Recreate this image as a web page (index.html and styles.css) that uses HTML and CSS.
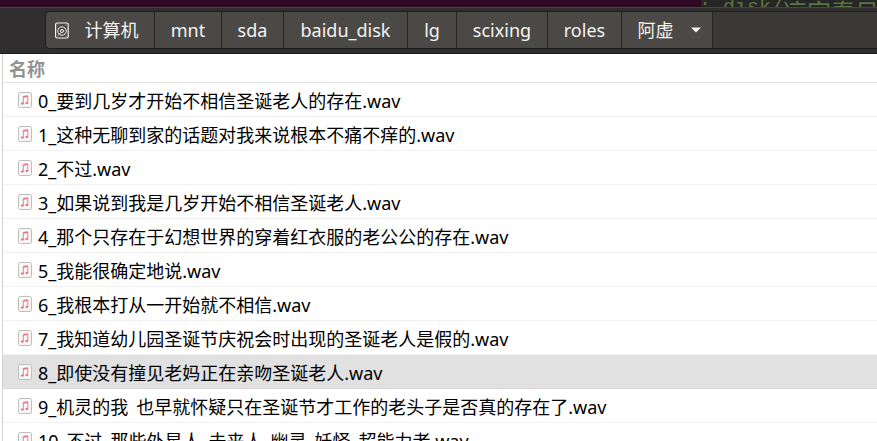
FILE: index.html
```
<!DOCTYPE html>
<html lang="zh-CN">
<head>
<meta charset="utf-8">
<title>阿虚</title>
<link rel="stylesheet" href="styles.css">
</head>
<body>
<div class="desktop"><div class="terminal"><span class="cmd">: disk/</span><span class="name">凉宫春日</span></div></div>
<header class="toolbar">
  <nav class="pathbar">
    <div class="crumb root">
      <svg width="14" height="17" viewBox="0 0 14 17" fill="none" stroke="#f4f4f2"><rect x=".6" y="1" width="12.600" height="15" rx="1.500" stroke-width="1.200"/><circle cx="7" cy="9" r="4.200" stroke-width="1"/><circle cx="7" cy="9" r="1.500" stroke-width="1"/><path d="M6 10.500L3.500 13" stroke-width=".9"/><path d="M2.500 3h1M10.500 3h1M2.500 14h1M10.500 14h1" stroke-width=".6"/></svg>
      <span>计算机</span>
    </div>
    <div class="crumb mnt"><span>mnt</span></div>
    <div class="crumb sda"><span>sda</span></div>
    <div class="crumb baidu"><span>baidu_disk</span></div>
    <div class="crumb lg"><span>lg</span></div>
    <div class="crumb scixing"><span>scixing</span></div>
    <div class="crumb roles"><span>roles</span></div>
    <div class="crumb current"><span>阿虚</span><svg width="10" height="6" viewBox="0 0 10 6"><path d="M0 .5h10L5 5.500z" fill="#f4f4f2"/></svg></div>
  </nav>
</header>
<main class="list">
  <div class="heading">名称</div>
  <div class="row"><svg class="icon"><use href="#note"/></svg><span>0_要到几岁才开始不相信圣诞老人的存在.wav</span></div>
  <div class="row"><svg class="icon"><use href="#note"/></svg><span>1_这种无聊到家的话题对我来说根本不痛不痒的.wav</span></div>
  <div class="row"><svg class="icon"><use href="#note"/></svg><span>2_不过.wav</span></div>
  <div class="row"><svg class="icon"><use href="#note"/></svg><span>3_如果说到我是几岁开始不相信圣诞老人.wav</span></div>
  <div class="row"><svg class="icon"><use href="#note"/></svg><span>4_那个只存在于幻想世界的穿着红衣服的老公公的存在.wav</span></div>
  <div class="row"><svg class="icon"><use href="#note"/></svg><span>5_我能很确定地说.wav</span></div>
  <div class="row"><svg class="icon"><use href="#note"/></svg><span>6_我根本打从一开始就不相信.wav</span></div>
  <div class="row"><svg class="icon"><use href="#note"/></svg><span>7_我知道幼儿园圣诞节庆祝会时出现的圣诞老人是假的.wav</span></div>
  <div class="row selected"><svg class="icon"><use href="#note"/></svg><span>8_即使没有撞见老妈正在亲吻圣诞老人.wav</span></div>
  <div class="row"><svg class="icon"><use href="#note"/></svg><span>9_机灵的我  也早就怀疑只在圣诞节才工作的老头子是否真的存在了.wav</span></div>
  <div class="row"><svg class="icon"><use href="#note"/></svg><span>10_不过  那些外星人  未来人  幽灵  妖怪  超能力者.wav</span></div>
</main>
<svg width="0" height="0">
  <symbol id="note" viewBox="0 0 14 16">
    <rect x=".5" y=".5" width="13" height="15" rx="1.8" fill="#f7f7f7" stroke="#bdbdbd"/>
    <path d="M5.300 11.500V4.500l4.500-.5v7" fill="none" stroke="#ee7485" stroke-width=".9"/>
    <path d="M5.300 4.900l4.500-.6" stroke="#ee7485" stroke-width="1.600"/>
    <ellipse cx="4.300" cy="11.600" rx="1.400" ry="1.100" fill="#ee6278"/>
    <ellipse cx="8.800" cy="11" rx="1.400" ry="1.100" fill="#ee6278"/>
  </symbol>
</svg>
</body>
</html>
```
FILE: styles.css
```
* { box-sizing: border-box; }
body {
  margin: 0;
  width: 877px;
  height: 441px;
  overflow: hidden;
  background: #fff;
  font: 18px/24px "Noto Sans", "Noto Sans CJK SC", sans-serif;
  color: #000;
}
.desktop {
  height: 7px;
  background: #300a24;
  display: flex;
  justify-content: flex-end;
  overflow: hidden;
}
.terminal {
  display: flex;
  width: 176px;
  height: 7px;
  background: #262626;
  color: #58773f;
  font: 20px/24px "Liberation Mono", monospace;
  white-space: pre;
  overflow: hidden;
}
.cmd { margin: -4px 0 0 -2px; }
.name { margin-top: -3px; font: 24px/28px "Noto Sans CJK SC", sans-serif; }
.toolbar {
  height: 47px;
  padding: 4px 0 0 45px;
  background: #302e2e;
  border-top: 1px solid #484146;
  border-bottom: 1px solid #1d1c1c;
}
.pathbar {
  display: flex;
  height: 38px;
  margin-top: -1px;
  border: 1px solid #1d1c1b;
  border-right: 0;
  border-radius: 5px 0 0 5px;
  background: #3a3935;
  overflow: hidden;
}
.crumb {
  display: flex;
  align-items: center;
  justify-content: center;
  flex: none;
  border-right: 1px solid #262524;
  background: #4a4946;
  color: #f4f4f2;
  white-space: nowrap;
}
.root { width: 109px; gap: 16px; padding-right: 7px; }
.mnt { width: 67px; }
.sda { width: 62px; }
.baidu { width: 124px; }
.lg { width: 49px; }
.scixing { width: 91px; }
.roles { width: 74px; }
.current { width: 91px; gap: 17px; padding-left: 4px; }
.list { border-left: 1px solid #d2d2d2; margin-left: 2px; }
.heading {
  height: 29px;
  padding: 3px 0 0 6px;
  border-bottom: 1px solid #e2e2e2;
  color: #929290;
  font-weight: 700;
}
.row {
  display: flex;
  align-items: center;
  height: 34px;
  padding: 2px 0 0 15px;
  gap: 6px;
  border-bottom: 1px solid #f1f1f1;
  white-space: pre;
  word-spacing: -0.7px;
}
.selected { background: #e1e1e1; border-color: #d8d8d8; }
.icon { width: 14px; height: 16px; margin-top: -1px; flex: none; }
```
